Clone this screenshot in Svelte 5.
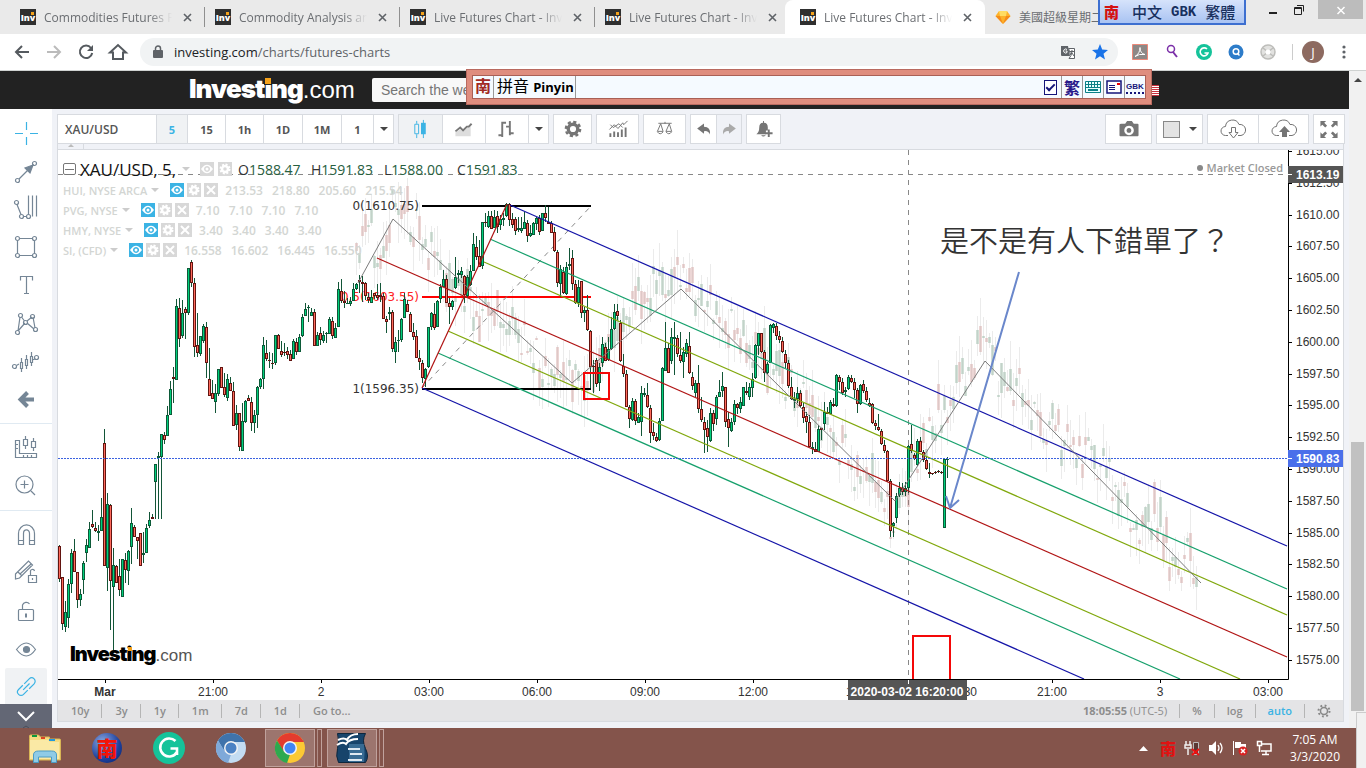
<script lang="ts">
	type Candle = [number, number, number, number, number];

	const tabs = [
		{ title: 'Commodities Futures Prices', active: false },
		{ title: 'Commodity Analysis and Opinion', active: false },
		{ title: 'Live Futures Chart - Investing.com', active: false },
		{ title: 'Live Futures Chart - Investing.com', active: false },
		{ title: 'Live Futures Chart - Investing.com', active: true }
	];

	const icons: Record<string, string> = {
		cross: '<path stroke="#3bb3e4" d="M12.5 1v8M12.5 16v8M1 12.5h8M16 12.5h8"/>',
		trend: '<path d="M5 20 19 6"/><circle cx="3.500" cy="21.500" r="2"/><circle cx="20.500" cy="4.500" r="2"/><path fill="#758696" d="m19 6-8 3 5 5z"/>',
		fork: '<circle cx="2.500" cy="5.500" r="2"/><circle cx="7.500" cy="19.500" r="2"/><circle cx="14.500" cy="19.500" r="2"/><path d="m3 7.500 4 10M9.500 19.500h3M14.500 17.500v-19M18.500-1.500v21M22.500-1.500v21"/>',
		rect: '<path d="M5.500 3.500h13M5.500 20.500h13M3.500 5.500v13M20.500 5.500v13"/><circle cx="3.500" cy="3.500" r="2"/><circle cx="20.500" cy="3.500" r="2"/><circle cx="3.500" cy="20.500" r="2"/><circle cx="20.500" cy="20.500" r="2"/>',
		text: '<path d="M6.500 7.500v-4h12v4M12.500 3.500v17M10 20.500h5"/>',
		pattern: '<path d="m4 20 2-14M7.500 6l3 4M13 10l5-4M19 6l2 11M4 20l7-8M13 12l7 6"/><circle cx="3.500" cy="21.500" r="2"/><circle cx="6.500" cy="4.500" r="2"/><circle cx="11.500" cy="11.500" r="2"/><circle cx="18.500" cy="5.500" r="2"/><circle cx="21.500" cy="18.500" r="2"/>',
		forecast: '<path d="M2.500 16.500 5 15M21 10l-3 1M7.500 9v14M12.500 6v14M17.500 3v14"/><path fill="#fff" d="M6.500 13.500h2v6h-2zM11.500 10.500h2v6h-2zM16.500 7.500h2v6h-2z"/><circle cx="0.500" cy="17.500" r="2"/><circle cx="22.500" cy="8.500" r="2"/>',
		back: '<path stroke-width="4" d="M20 12.500H8M13.500 5.500l-7 7 7 7"/>',
		measure: '<path d="M1.500 4.500h4v13h17v4h-21zM2 8.500h2M2 12.500h2M9.500 19v2M13.500 19v2M17.500 19v2M11.500 0v3M11.500 10v3M19.500 2v3M19.500 12v3"/><path d="M9.500 3.500h4v6h-4zM17.500 5.500h4v6h-4z"/>',
		zoom: '<circle cx="10.500" cy="10.500" r="8.500"/><path d="M17 17l4 4M10.500 6.500v8M6.500 10.500h8"/>',
		magnet: '<path d="M4.500 21.500v-11a7.500 8 0 0 1 16 0v11h-5v-11a2.500 3 0 0 0-6 0v11zM4.500 17.500h5M15.500 17.500h5"/>',
		pencil: '<path d="m1.500 13 13-13 4 4-13 13-4 1zM4 11l4 4M6 13l11-10M14.500 14.500h8v7h-8zM16.500 14v-3a2 2 0 0 1 4-1M18.500 17v2"/>',
		lock: '<rect x="4.500" y="10.500" width="15" height="11" rx="1"/><path d="M8.500 10V6a4 4 0 0 1 7-1"/><path stroke-width="2" d="M12 14.500v4"/>',
		eye: '<path d="M2.500 12.500q10-13 19 0-9 13-19 0z"/><circle cx="12.500" cy="12.500" r="3" fill="#758696"/>',
		link: '<g stroke="#3bb3e4" transform="rotate(-45 12 12)"><path d="M11 8.500H5a3.500 3.500 0 0 0 0 7h6M13 8.500h7a3.500 3.500 0 0 1 0 7h-7M8 12h9"/></g>'
	};

	const toolGroups = [
		['cross', 'trend', 'fork', 'rect', 'text', 'pattern', 'forecast', 'back'],
		['measure', 'zoom'],
		['magnet', 'pencil', 'lock', 'eye', 'link']
	];

	const intervals = [
		{ label: '5', width: 31 },
		{ label: '15', width: 38 },
		{ label: '1h', width: 38 },
		{ label: '1D', width: 39 },
		{ label: '1M', width: 39 },
		{ label: '1', width: 32 }
	];

	const barIcons: Record<string, string> = {
		candles: '<path stroke="#3bb3e4" fill="none" d="M5.500 2v3M5.500 16v4M3.500 5.500h4v10h-4zM12.500 1v19"/><path fill="#3bb3e4" d="M10 4h5v12h-5z"/>',
		area: '<path fill="#ddd" d="m1 14 5-3 3 2 8-7v12H1z"/><path fill="none" stroke="#777" stroke-width="2" d="m1 13 5-4 3 3 4-4h2l3-3"/>',
		bars: '<path fill="none" stroke="#777" stroke-width="2" d="M1 17h4M5 19V3M5 4h4M9 8h4M13 2v15M13 15h4"/>',
		gear: '<circle cx="10" cy="10.500" r="5" fill="none" stroke="#757575" stroke-width="3.500"/><circle cx="10" cy="10.500" r="7.500" fill="none" stroke="#757575" stroke-width="2.500" stroke-dasharray="3.300 2.590"/>',
		stats: '<path stroke="#757575" stroke-width="2" d="M2 19v-4M6 19v-6M10 19v-5M14 19v-8M18 19v-10"/><path fill="none" stroke="#757575" d="m1 11 5-5 4 4 5-6 1 2 4-4M2 6l3 3 6-4 4 4"/>',
		scales: '<path fill="none" stroke="#757575" d="M3 4.500h14M10 3v2M5.500 5 2 13h6zM14.500 5 11 13h6z"/><path fill="none" stroke="#757575" d="M2 13.500q3 4 6 0M11 13.500q3 4 6 0"/>',
		undo: '<path fill="#757575" d="M2 10 10 4v4q8 0 7 9-2-5-7-4v3z"/>',
		redo: '<path fill="#aaa" d="M18 10 10 4v4q-8 0-7 9 2-5 7-4v3z"/>',
		bell: '<path fill="#757575" d="M2 16q3-2 3-7 0-5 4-5V2h1v2q4 0 4 5v3h-2v4zM7 17h5q-3 3-5 0z"/><path stroke="#757575" stroke-width="2" d="M15 11v8M11 15h8"/>',
		camera: '<path fill="#757575" fill-rule="evenodd" d="M2 5h4l2-3h5l2 3h4q1 0 1 1v11q0 1-1 1H1q-1 0-1-1V6q0-1 2-1zM10 7a5 5 0 1 0 .1 0zM10 9.500a2.500 2.500 0 1 1-.1 0z"/>',
		full: '<path fill="#757575" d="M1 2h6L5 4l3 3-2 2-3-3-2 2zM19 2v6l-2-2-3 3-2-2 3-3-2-2zM1 20v-6l2 2 3-3 2 2-3 3 2 2zM19 20h-6l2-2-3-3 2-2 3 3 2-2z"/>'
	};

	const legend = [
		{ name: 'HUI, NYSE ARCA', values: ['213.53', '218.80', '205.60', '215.54'] },
		{ name: 'PVG, NYSE', values: ['7.10', '7.10', '7.10', '7.10'] },
		{ name: 'HMY, NYSE', values: ['3.40', '3.40', '3.40', '3.40'] },
		{ name: 'SI, (CFD)', values: ['16.558', '16.602', '16.445', '16.550'] }
	];

	const quote = [
		['O', '1588.47'],
		['H', '1591.83'],
		['L', '1588.00'],
		['C', '1591.83']
	];

	// high, body top, body bottom, low, rising
	const bars: Candle[] = [
		[545,546,579,582,0],[577,577,624,630,0],[601,612,627,632,1],[579,584,618,628,1],[549,553,584,593,1],[539,551,572,572,0],
		[572,572,600,608,0],[589,594,600,606,1],[561,563,580,594,1],[539,545,553,562,1],[522,529,548,548,1],[510,524,527,528,0],
		[522,528,531,532,0],[525,531,533,541,1],[498,517,531,531,1],[429,443,566,566,0],[493,504,568,591,1],[504,505,581,630,0],
		[548,565,587,650,1],[565,566,583,583,0],[559,576,590,596,0],[559,559,597,597,1],[553,560,570,583,0],[550,551,571,585,1],
		[508,523,547,564,1],[525,527,537,537,0],[537,537,541,559,0],[533,533,566,566,0],[532,553,555,563,1],[524,528,553,553,1],
		[512,520,526,528,1],[514,517,519,519,0],[464,464,482,519,1],[452,456,458,519,1],[434,434,457,519,1],[432,435,440,444,0],
		[406,415,436,436,1],[381,389,415,415,1],[367,377,379,403,0],[299,306,380,380,1],[298,308,339,347,0],[300,313,336,338,1],
		[307,309,313,339,0],[268,268,313,315,1],[260,262,283,287,0],[278,283,347,357,0],[313,345,353,357,0],[336,336,354,356,1],
		[324,326,341,343,1],[322,327,363,378,0],[348,379,396,396,0],[380,393,399,399,0],[384,393,402,413,1],[369,369,394,396,1],
		[367,367,388,388,0],[373,387,395,397,0],[374,379,398,401,1],[377,383,391,391,0],[382,391,426,426,0],[405,413,425,430,1],
		[413,413,447,451,0],[403,421,451,451,1],[400,401,422,423,1],[395,398,401,401,0],[397,402,423,431,0],[410,415,423,433,1],
		[386,387,415,428,1],[378,379,387,389,1],[337,345,379,389,1],[340,353,359,361,0],[352,360,361,368,0],[353,363,364,369,0],
		[335,335,363,365,1],[334,335,349,349,0],[341,351,355,357,0],[343,352,353,356,0],[347,351,355,359,0],[350,354,361,361,0],
		[339,341,359,359,1],[338,342,352,355,0],[334,337,352,352,1],[314,317,336,337,1],[303,309,316,316,1],[305,307,308,322,1],
		[308,312,316,316,1],[309,312,346,346,0],[332,335,346,346,1],[327,333,340,345,0],[331,335,341,343,1],[332,333,334,343,1],
		[317,319,334,334,1],[317,321,336,339,0],[323,328,338,338,1],[282,289,327,327,1],[279,291,301,303,0],[291,301,303,308,0],
		[298,303,304,304,1],[297,301,304,306,1],[283,289,301,301,1],[283,284,289,290,1],[275,280,282,293,0],[276,282,284,302,0],
		[282,283,296,300,0],[293,297,300,303,0],[290,297,303,303,1],[293,293,296,299,0],[284,295,298,300,0],[283,295,297,302,0],
		[293,296,319,319,0],[316,319,322,333,0],[307,312,314,320,1],[310,312,349,352,0],[337,342,352,363,1],[330,340,341,352,1],
		[318,319,340,342,1],[293,299,318,318,1],[300,304,312,312,0],[312,314,332,332,0],[323,332,337,340,0],[330,336,358,358,0],
		[350,358,362,370,0],[360,363,378,383,0],[368,369,379,387,1],[327,327,367,368,1],[312,313,327,330,1],[303,314,328,330,0],
		[300,301,327,327,1],[284,287,299,303,1],[270,279,287,287,1],[275,279,303,303,0],[298,303,307,324,0],[300,301,307,310,1],
		[257,277,288,289,1],[270,273,275,283,1],[267,271,275,278,1],[275,276,295,303,0],[275,277,296,297,1],[265,271,285,286,1],
		[233,244,271,271,1],[236,247,257,260,0],[240,256,267,267,0],[222,222,266,269,1],[213,222,223,227,0],[211,216,227,228,1],
		[211,216,229,229,0],[210,217,228,228,1],[211,216,227,233,0],[215,219,225,230,1],[213,218,220,226,1],[203,204,216,217,1],
		[203,204,220,226,0],[213,219,225,228,0],[217,219,231,235,0],[217,228,230,232,1],[217,228,231,233,1],[212,222,229,229,1],
		[220,223,236,242,0],[225,233,236,237,1],[222,223,235,235,1],[217,218,224,230,1],[215,218,232,235,0],[213,213,231,231,1],
		[205,213,218,222,0],[207,222,224,224,0],[221,223,233,233,0],[227,232,251,252,0],[250,252,283,287,0],[265,269,284,297,1],
		[267,272,293,294,0],[262,267,294,295,1],[248,264,266,270,1],[250,258,284,290,0],[280,284,303,304,0],[280,287,303,307,1],
		[281,281,313,318,0],[307,310,313,322,1],[295,310,330,331,0],[330,331,367,388,0],[360,366,367,393,0],[358,360,384,387,0],
		[363,367,383,391,1],[337,344,363,367,1],[343,347,361,361,0],[337,349,360,361,1],[317,329,349,350,1],[304,312,329,330,1],
		[304,311,316,320,0],[320,323,361,362,0],[354,366,374,377,0],[370,374,407,407,0],[405,407,419,428,0],[398,401,420,421,1],
		[399,401,421,425,0],[413,417,423,423,1],[386,393,422,436,1],[388,393,395,397,1],[383,395,407,408,0],[405,408,433,443,0],
		[423,432,436,440,0],[433,437,441,442,0],[418,421,440,441,1],[367,368,421,421,1],[322,348,371,371,1],[343,348,373,373,0],
		[328,337,361,364,1],[322,337,339,375,1],[335,338,354,357,0],[332,355,361,363,0],[347,352,362,378,1],[339,343,354,357,1],
		[332,346,373,374,0],[372,377,386,390,0],[380,383,393,397,1],[365,383,409,413,0],[397,409,420,422,0],[417,422,430,453,0],
		[420,428,437,452,0],[408,413,441,442,1],[410,413,424,431,0],[395,397,419,425,1],[380,392,397,397,1],[372,386,391,397,1],
		[387,387,422,427,0],[412,419,428,447,0],[418,422,431,432,1],[400,404,422,425,1],[403,404,408,414,0],[397,402,409,413,1],
		[387,387,406,406,1],[382,391,393,395,0],[383,387,397,400,1],[373,379,388,397,1],[344,345,378,379,1],[333,333,346,355,1],
		[333,333,352,353,0],[350,352,373,382,0],[362,364,373,374,1],[324,325,363,363,1],[323,324,328,333,1],[323,326,336,340,0],
		[331,336,340,343,0],[337,341,352,353,0],[350,354,363,368,0],[360,363,386,388,0],[377,387,399,400,0],[392,399,401,408,1],
		[387,393,399,403,1],[390,393,406,408,0],[403,407,418,423,0],[412,416,422,433,0],[415,422,447,447,0],[442,447,449,454,1],
		[442,449,452,452,0],[425,429,452,452,1],[428,428,430,440,0],[402,412,424,430,1],[407,412,414,414,0],[400,402,414,414,1],
		[398,404,406,407,0],[374,375,406,407,1],[375,377,382,390,0],[378,382,393,395,0],[387,390,392,397,1],[375,377,389,390,1],
		[375,378,382,383,0],[378,382,390,398,0],[388,390,404,413,0],[384,385,404,405,1],[380,384,391,393,0],[387,391,400,402,0],
		[398,403,406,407,0],[403,404,423,424,0],[420,423,426,430,0],[414,427,430,431,0],[429,431,444,445,0],[440,445,451,453,0],
		[450,451,481,482,0],[479,481,531,537,0],[522,523,526,537,1],[493,496,518,523,1],[482,488,495,497,1],[483,488,492,495,0],
		[482,488,492,496,1],[445,446,488,493,1],[425,444,451,453,0],[453,455,459,460,0],[439,441,465,466,1],[437,441,452,452,0],
		[450,452,460,462,0],[457,460,469,470,0],[463,472,474,478,0],[473,473,474,475,0],[471,472,473,474,0],[470,471,472,473,0],
		[471,472,473,474,0],[458,459,528,528,1],[457,459,460,478,1]
	];

	const ghostPath = [
		[357,265],[366,232],[378,246],[390,212],[404,208],[415,230],[440,268],[470,302],[500,320],[520,338],[545,365],
		[575,382],[600,372],[625,310],[650,290],[680,275],[720,322],[760,350],[795,390],[815,424],[850,462],[880,500],
		[895,528],[905,480],[920,450],[935,420],[955,392],[970,365],[981,345],[992,360],[1005,395],[1020,388],[1030,410],
		[1050,430],[1080,452],[1100,462],[1115,482],[1135,524],[1150,512],[1160,530],[1172,560],[1190,556],[1197,608]
	];

	// projected bars follow the path with a fixed pseudo random spread
	function buildGhosts() {
		const out = [];
		let seed = 11;
		const rnd = () => (seed = (seed * 16807) % 2147483647) / 2147483647;
		let k = 0;
		for (let x = 356; x <= 1197; x += 3) {
			while (k < ghostPath.length - 2 && ghostPath[k + 1][0] < x) k++;
			const [x0, y0] = ghostPath[k];
			const [x1, y1] = ghostPath[k + 1];
			const mid = Math.round(y0 + ((y1 - y0) * (x - x0)) / (x1 - x0) + (rnd() - 0.5) * 44);
			const half = Math.round(1 + rnd() * rnd() * 18);
			const high = mid - half - Math.round(rnd() * 28);
			const low = mid + half + Math.round(rnd() * 28);
			out.push({ x, top: mid - half, size: half * 2, high, low, up: rnd() > 0.45 });
		}
		return out;
	}
	const ghosts = buildGhosts();

	const channel = [
		{ d: 'M510 205 1287 546', color: '#1414a8' },
		{ d: 'M490 239 1287 589', color: '#16a06c' },
		{ d: 'M484 262 1287 615', color: '#80a80c' },
		{ d: 'M377 258 1287 657', color: '#b01414' },
		{ d: 'M448 331 1240 679', color: '#80a80c' },
		{ d: 'M438 353 1180 679', color: '#16a06c' },
		{ d: 'M422 388 1084 679', color: '#1414a8' }
	];

	const prices = Array.from({ length: 17 }, (_, i) => ({
		label: (1615 - i * 2.5).toFixed(2),
		y: Math.round(151 + i * 31.8)
	}));

	const times = [
		['Mar', 105], ['21:00', 213], ['2', 321], ['03:00', 429], ['06:00', 537], ['09:00', 645],
		['12:00', 753], ['15:00', 861], ['17:30', 962], ['21:00', 1052], ['3', 1160], ['03:00', 1268]
	] as [string, number][];

	const ranges = ['10y', '3y', '1y', '1m', '7d', '1d', 'Go to...'];
</script>

{#snippet barIcon(name: string, size = 20)}
	<svg width={size} height={size} viewBox="0 0 20 21" aria-hidden="true">{@html barIcons[name]}</svg>
{/snippet}

{#snippet inv()}
	<span class="inv">Inv<i></i></span>
{/snippet}

{#snippet legendEye()}
	<svg width="14" height="14" viewBox="0 0 14 14"><path fill="#fff" fill-rule="evenodd" d="M1 7q6-8.500 12 0-6 8.500-12 0zM7 4a3 3 0 1 0 .1 0z" /><circle cx="7" cy="7" r="1.500" fill="#fff" /></svg>
{/snippet}

{#snippet legendGear()}
	<svg width="14" height="14" viewBox="0 0 14 14"><circle cx="7" cy="7" r="3" fill="none" stroke="#fff" stroke-width="2.500" /><circle cx="7" cy="7" r="4.500" fill="none" stroke="#fff" stroke-width="2" stroke-dasharray="2 1.530" /></svg>
{/snippet}

{#snippet chromeLogo(a: string, b: string, c: string, d: string)}
	<svg width="32" height="32" viewBox="0 0 32 32">
		<circle cx="16" cy="16" r="15" fill={c} />
		<path fill={a} d="M3 8.500A15 15 0 0 1 29 8.500L30 10H16L9.500 19.500z" />
		<path fill={b} d="M3 8.500 10 19.500l6 3L13 31A15 15 0 0 1 3 8.500z" />
		<circle cx="16" cy="16" r="7" fill="#f4f4f4" /><circle cx="16" cy="16" r="5.500" fill={d} />
	</svg>
{/snippet}

<div class="screen">
	<nav class="tabs" aria-label="Tabs">
		{#each tabs as tab}
			<div class="tab" class:active={tab.active}>
				{@render inv()}
				<span class="tab-title">{tab.title}</span>
				<button class="close" aria-label="Close tab"><svg width="9" height="9" viewBox="0 0 9 9"><path stroke="#5f6368" stroke-width="1.600" d="m1 1 7 7M8 1 1 8" /></svg></button>
			</div>
		{/each}
		<div class="tab last">
			<svg width="16" height="16" viewBox="0 0 16 16"><path fill="#fdb22a" d="M4 2h8l3.500 5L8 15 .500 7z" /><path fill="#ffdc62" d="M4 2h8L11 7H5z" /><path fill="#f58b1a" d="M.500 7H5l3 8zM15.500 7H11l-3 8z" /></svg>
			<span class="tab-title">美國超級星期二</span>
		</div>
		<div class="window-buttons">
			<button aria-label="Minimize"><svg width="30" height="18" viewBox="0 0 30 18"><path stroke="#222" stroke-width="2" d="M11 12h8" /></svg></button>
			<button aria-label="Restore"><svg width="20" height="18" viewBox="0 0 20 18"><path fill="none" stroke="#222" d="M6.500 6.500h7v7h-7zM6 7.500h8M9 4.500h6.500v6" /></svg></button>
			<button class="exit" aria-label="Close"><svg width="45" height="18" viewBox="0 0 45 18"><path stroke="#fff" stroke-width="1.500" d="m19.500 6 7 7M26.500 6l-7 7" /></svg></button>
		</div>
	</nav>

	<div class="address-bar">
		<button aria-label="Back"><svg width="20" height="20" viewBox="0 0 20 20"><path fill="none" stroke="#555a5f" stroke-width="2" d="M17 10H4M10 4l-6 6 6 6" /></svg></button>
		<button aria-label="Forward"><svg width="20" height="20" viewBox="0 0 20 20"><path fill="none" stroke="#bbb" stroke-width="2" d="M3 10h13M10 4l6 6-6 6" /></svg></button>
		<button aria-label="Reload"><svg width="20" height="20" viewBox="0 0 20 20"><path fill="none" stroke="#555a5f" stroke-width="2" d="M15 6a6.200 6.200 0 1 0 1.200 5" /><path fill="#555a5f" d="M17 3v6h-6z" /></svg></button>
		<button aria-label="Home"><svg width="20" height="20" viewBox="0 0 20 20"><path fill="none" stroke="#555a5f" stroke-width="2" d="M2 10.500 10 3l8 7.500h-3V17H5v-6.500z" /></svg></button>
		<div class="omnibox">
			<svg width="12" height="14" viewBox="0 0 12 14"><path fill="#5f6368" d="M2 5h8q1 0 1 1v6q0 1-1 1H2q-1 0-1-1V6q0-1 1-1z" /><path fill="none" stroke="#5f6368" stroke-width="1.500" d="M3.500 6V3.500a2.500 2.500 0 0 1 5 0V6" /></svg>
			<span class="url"><b>investing.com</b>/charts/futures-charts</span>
			<svg width="16" height="16" viewBox="0 0 16 16"><path fill="#5f6368" d="M1 2h7l2 10H2q-1 0-1-1z" /><path fill="#fff" stroke="#5f6368" d="M8.500 4.500h6v10H9l2-3z" /><path stroke="#5f6368" d="M10 7.500h4M12 6v2l-1 3M12 9l2 3" /><path fill="none" stroke="#fff" d="M7 5.500a2 2 0 1 0 0 3V7H5.500" /></svg>
			<svg width="16" height="16" viewBox="0 0 16 16"><path fill="#1a73e8" d="m8 0 2.200 5.600 5.800.4-4.500 3.700 1.500 5.800L8 12.300l-5 3.200 1.500-5.800L0 6l5.800-.4z" /></svg>
		</div>
		<div class="extensions">
			<svg width="16" height="16" viewBox="0 0 16 16"><path fill="#8d8886" stroke="#ed8979" d="M.500.500h15v15H.500z" /><path fill="none" stroke="#fff" d="M3 12.500q5-3 5-9 0 6 5 7-6-1-10 2z" /></svg>
			<svg width="16" height="16" viewBox="0 0 16 16"><circle cx="7" cy="5" r="3.500" fill="none" stroke="#7b2fa8" stroke-width="1.500" /><path stroke="#7b2fa8" stroke-width="2" d="m9 8 4 5" /></svg>
			<svg width="16" height="16" viewBox="0 0 16 16"><circle cx="8" cy="8" r="8" fill="#15c39a" /><path fill="none" stroke="#fff" stroke-width="1.600" d="M11 5a4 4 0 1 0 1 4H8.500" /></svg>
			<svg width="16" height="16" viewBox="0 0 16 16"><circle cx="8" cy="8" r="7.500" fill="#2d7cc9" /><circle cx="8" cy="7.500" r="2.800" fill="none" stroke="#fff" stroke-width="1.500" /><path stroke="#fff" stroke-width="1.500" d="m9.500 9.500 2 2" /></svg>
			<svg width="16" height="16" viewBox="0 0 16 16"><circle cx="8" cy="8" r="7" fill="#e2e2e0" stroke="#bdbdba" stroke-width="1.500" /><path fill="none" stroke="#bdbdba" stroke-width="1.500" d="m3 4 10 8M13 4 3 12" /><circle cx="8" cy="8" r="2.500" fill="#fff" /></svg>
			<span class="divider"></span>
			<span class="avatar">J</span>
			<button aria-label="Menu"><svg width="8" height="16" viewBox="0 0 8 16"><g fill="#5f6368"><circle cx="4" cy="3" r="1.600" /><circle cx="4" cy="8" r="1.600" /><circle cx="4" cy="13" r="1.600" /></g></svg></button>
		</div>
	</div>

	<div class="page">
		<div class="site">
			<header class="site-header">
				<a class="logo" href="#home"><strong>Invest<span>i</span>ng</strong>.com</a>
				<input type="text" placeholder="Search the website..." aria-label="Search the website" />
				<svg class="flag" width="12" height="11" viewBox="0 0 12 11"><path fill="#fff" d="M0 0h12v11H0z" /><path stroke="#c8313e" d="M0 .500h12M0 2.500h12M0 4.500h12M0 6.500h12M0 8.500h12M0 10.500h12" /></svg>
			</header>

			<div class="workspace">
				<aside class="sidebar">
					{#each toolGroups as group}
						<div class="tool-group">
							{#each group as name}
								<button class="tool" class:selected={name === 'link'} aria-label={name}>
									<svg width="24" height="24" viewBox="0 0 24 24" fill="none" stroke="#758696" stroke-width="1.200">{@html icons[name]}</svg>
								</button>
							{/each}
						</div>
					{/each}
					<button class="more" aria-label="More tools"><svg width="18" height="24" viewBox="0 0 18 24"><path fill="none" stroke="#fff" stroke-width="2" d="m1 8 8 8 8-8" /><path fill="none" stroke="#4c4f5a" d="m6 24 3-2 3 2" /></svg></button>
				</aside>

				<main class="chart">
					<div class="toolbar">
						<div class="bar-group intervals">
							<button class="symbol">XAU/USD</button>
							{#each intervals as item, i}
								<button class:on={i === 0} style="width: {item.width}px">{item.label}</button>
							{/each}
							<button class="drop" aria-label="More intervals"><i class="caret"></i></button>
						</div>
						<div class="bar-group styles">
							<button class="on wide" aria-label="Candles">{@render barIcon('candles')}</button>
							<button class="wide" aria-label="Area">{@render barIcon('area')}</button>
							<button class="wide" aria-label="Bars">{@render barIcon('bars')}</button>
							<button class="drop" aria-label="More styles"><i class="caret"></i></button>
						</div>
						<div class="bar-group"><button class="mid" aria-label="Settings">{@render barIcon('gear')}</button></div>
						<div class="bar-group"><button class="wide" aria-label="Indicators">{@render barIcon('stats')}</button></div>
						<div class="bar-group"><button class="wide" aria-label="Compare">{@render barIcon('scales')}</button></div>
						<div class="bar-group">
							<button class="small" aria-label="Undo">{@render barIcon('undo', 18)}</button>
							<button class="small off" aria-label="Redo">{@render barIcon('redo', 18)}</button>
						</div>
						<div class="bar-group"><button class="bell" aria-label="Alert">{@render barIcon('bell')}</button></div>
						<div class="bar-group right"><button class="large" aria-label="Snapshot">{@render barIcon('camera')}</button></div>
						<div class="bar-group"><button class="large" aria-label="Background"><i class="swatch"></i><i class="caret"></i></button></div>
						<div class="bar-group">
							<button class="cloud" aria-label="Load"><svg width="26" height="20" viewBox="0 0 26 20"><path fill="none" stroke="#757575" d="M8 16.500H5.500a4.500 4.500 0 0 1 0-9 7 7 0 0 1 13.500-2 5.500 5.500 0 0 1 2 11H18" /><path fill="#fff" stroke="#757575" d="M11.500 8.500h4v5H18L13.500 19 9 13.500h2.500z" /></svg></button>
							<button class="cloud" aria-label="Save"><svg width="26" height="20" viewBox="0 0 26 20"><path fill="none" stroke="#757575" d="M8 16.500H5.500a4.500 4.500 0 0 1 0-9 7 7 0 0 1 13.500-2 5.500 5.500 0 0 1 2 11H18" /><path fill="#757575" d="M11 18v-5H8l5.500-6 5.500 6h-3v5z" /></svg></button>
						</div>
						<div class="bar-group"><button class="full" aria-label="Full screen">{@render barIcon('full')}</button></div>
					</div>
					<div class="fold"><i></i></div>

					<div class="plot">
						<svg class="canvas" viewBox="58 150 1285 550" role="img" aria-label="XAU/USD, 5">
							<clipPath id="pane"><path d="M58 150h1230v529H58z" /></clipPath>
							<g clip-path="url(#pane)">
								<path class="cross" d="M58 174.500h1230M908.500 150v529" />
								{#each ghosts as g}
									<path stroke="#000" stroke-opacity="0.08" d="M{g.x + 0.5} {g.high}V{g.low}" />
									<rect x={g.x - 1} y={g.top} width="3" height={g.size} fill={g.up ? '#6f9e82' : '#c4807c'} fill-opacity="0.32" />
								{/each}
								<g class="fib">
									<text x="419" y="210">0(1610.75)</text>
									<text x="419" y="301" fill="#f22">0.5(1603.55)</text>
									<text x="419" y="393">1(1596.35)</text>
								</g>
								<path stroke="#000" stroke-width="2" d="M422 206h169M422 389h169" />
								<path stroke="#f00" stroke-width="2" d="M422 297h169" />
								<path class="cross" d="m422 388 169-182" />
								{#each bars as [high, top, bottom, low, up], i}
									<path stroke="#125537" d="M{59.5 + i * 3} {high}V{low}" />
									<rect x={58 + i * 3} y={top} width="3" height={Math.max(bottom - top, 1)} fill={up ? '#0c5a38' : '#621410'} />
									{#if bottom - top > 2}
										<rect x={59 + i * 3} y={top + 1} width="1" height={bottom - top - 2} fill={up ? '#00cf7c' : '#ff6a5c'} />
									{/if}
								{/each}
								{#each channel as line}
									<path d={line.d} stroke={line.color} stroke-width="1.200" />
								{/each}
								<path stroke="#b01414" stroke-width="1.200" d="m422 388 85-184" />
								<path fill="none" stroke="#7b7b7b" d="m358 283 35-64 179 164 109-94 214 212 90-140 216 222" />
								<path fill="none" stroke="#f40808" stroke-width="2" d="M584 373h25v26h-25zM913 680v-44h37v44" />
								<path fill="none" stroke="#6a87cb" stroke-width="2" d="m1019 272-69 236M946 496l4 12 9-8" />
								<path stroke="#3b62e0" stroke-dasharray="2 1" d="M58 458.500h1230" />
								<text class="note" x="940" y="252">是不是有人下錯單了？</text>
							</g>
							<g class="price-axis">
								{#each prices as price}
									<path stroke="#000" d="M1288 {price.y + 0.5}h4" />
									<text x="1296" y={price.y + 4}>{price.label}</text>
								{/each}
							</g>
							<path stroke="#000" fill="none" d="M1288.500 150v529.500H58" />
							<path fill="#555" d="M1288 166h55v17h-55z" />
							<path fill="#4a6fea" d="M1288 450h55v17h-55z" />
							<path stroke="#fff" d="M1288 174.500h4M1288 458.500h4" />
							<text class="tag" x="1296" y="179">1613.19</text>
							<text class="tag" x="1296" y="463">1590.83</text>
							<g class="time-axis">
								{#each times as [label, x]}
									<path stroke="#000" d="M{x + 0.5} 680v3" />
									<text {x} y="696" class:bold={label === 'Mar'}>{label}</text>
								{/each}
							</g>
							<path fill="#555" d="M848 680h119v20H848z" />
							<path stroke="#fff" d="M908.500 680v4" />
							<text class="tag stamp" x="907" y="696">2020-03-02 16:20:00</text>
						</svg>

						<div class="legend">
							<div class="legend-main">
								<button class="fold-box" aria-label="Collapse"></button>
								<span class="pair">XAU/USD, 5,</span>
								<i class="caret pale"></i>
								<button class="chip" aria-label="Hide">{@render legendEye()}</button>
								<button class="chip" aria-label="Format">{@render legendGear()}</button>
								{#each quote as [key, value]}
									<span class="quote">{key}<b>{value}</b></span>
								{/each}
							</div>
							{#each legend as row}
								<div class="legend-row">
									<span class="legend-name">{row.name}</span>
									<i class="caret pale"></i>
									<span class="chips">
										<button class="chip blue" aria-label="Hide {row.name}">{@render legendEye()}</button>
										<button class="chip" aria-label="Format {row.name}">{@render legendGear()}</button>
										<button class="chip" aria-label="Remove {row.name}"><svg width="14" height="14" viewBox="0 0 14 14"><path stroke="#fff" stroke-width="2" d="m3 3 8 8M11 3l-8 8" /></svg></button>
									</span>
									{#each row.values as value}
										<span class="legend-value">{value}</span>
									{/each}
								</div>
							{/each}
						</div>
						<div class="market"><i></i>Market Closed</div>
						<div class="watermark logo"><strong>Invest<span>i</span>ng</strong>.com</div>
					</div>

					<footer class="bottom-bar">
						{#each ranges as range}
							<button class="range">{range}</button>
						{/each}
						<div class="clock"><b>18:05:55</b> (UTC-5)</div>
						<button>%</button>
						<button>log</button>
						<button class="auto">auto</button>
						<button aria-label="Chart settings"><svg width="14" height="14" viewBox="0 0 14 14" fill="none" stroke="#888"><circle cx="7" cy="7" r="3.500" stroke-width="1.500" /><circle cx="7" cy="7" r="5.500" stroke-width="2" stroke-dasharray="1.800 2.520" /></svg></button>
					</footer>
				</main>
			</div>
		</div>
		<div class="scrollbar"><i></i><span></span></div>
	</div>

	<footer class="taskbar">
		<button class="app" aria-label="Explorer">
			<svg width="34" height="32" viewBox="0 0 34 32"><path fill="#f4dc83" stroke="#d8b655" d="M1.500 6.500V4q0-1 1-1h8l2 2h9V7h10q1 0 1 1v20h-31z" /><path fill="#0b9a3c" d="M4 3h5v2H4z" /><path fill="#d42" d="M13 5h4v2h-4z" /><path fill="#29d" d="M21 7h6v2h-6z" /><path fill="#fae9a5" d="M2 8h18l2 2h9v17H2z" /><path fill="#8fcbe6" stroke="#4c9cc4" d="M5.500 30.500V23q0-4 5-4h13q5 0 5 4v7.500h-5V25h-13v5.500z" /></svg>
		</button>
		<button class="app" aria-label="NJStar"><span class="globe">南</span></button>
		<button class="app" aria-label="Grammarly"><svg width="32" height="32" viewBox="0 0 32 32"><circle cx="16" cy="16" r="16" fill="#15c39a" /><path fill="none" stroke="#fff" stroke-width="2.600" d="M22.500 9A9 9 0 1 0 24 20v-3.500h-6.500M24 17v6" /></svg></button>
		<button class="app" aria-label="Chromium">{@render chromeLogo('#3f73ab', '#7fa9d9', '#c3dcf2', '#4b82c4')}</button>
		<button class="app open" aria-label="Chrome">{@render chromeLogo('#e33b2e', '#2da94f', '#fcc934', '#4285f4')}</button>
		<button class="app open" aria-label="Writer">
			<svg width="32" height="32" viewBox="0 0 32 32"><path fill="#17446b" stroke="#0e263c" d="M1.500 1.500h28q-4 7 0 15t0 14h-27q-3-6-1-14t0-15z" /><path fill="#4f86ad" d="M13 12h15q1 8 0 18H13z" opacity=".6" /><path fill="none" stroke="#fff" stroke-width="2" d="M2 8q6-3 9 0 3-6 11-6M1 13q6-4 9-1 3-5 12-5" /><path stroke="#dfe9f2" stroke-width="2" d="M12 17h12M14 22h12M12 28h14" /></svg>
		</button>
		<div class="tray">
			<svg width="9" height="5" viewBox="0 0 9 5"><path fill="#fff" d="m0 5 4.500-5L9 5z" /></svg>
			<span class="tray-nj">南</span>
			<svg width="16" height="16" viewBox="0 0 16 16"><path fill="none" stroke="#eee" stroke-width="1.500" d="M2 1v4M6 1v4M1 5h6v3H1zM4 9v6" /><path fill="#5b3833" stroke="#bbb" d="M9.500 2.500h5v12h-5z" /><path stroke="#e11" stroke-width="2" d="m8 9 7 6M15 9l-7 6" /></svg>
			<svg width="16" height="16" viewBox="0 0 16 16"><path fill="#fff" d="M1 5h3l4-4v14l-4-4H1z" /><path fill="none" stroke="#fff" stroke-width="1.300" d="M10 5q2 3 0 6M12 3q4 5 0 10" /></svg>
			<svg width="16" height="16" viewBox="0 0 16 16"><path fill="#fff" d="M1 1h1v14H1zM3 2h6v2h5v6H8V8H3z" /><circle cx="11" cy="11" r="4.500" fill="#d92222" /><path stroke="#fff" stroke-width="1.500" d="m9 9 4 4M13 9l-4 4" /></svg>
			<svg width="16" height="16" viewBox="0 0 16 16"><path fill="none" stroke="#fff" stroke-width="1.500" d="M6 4h9v7H5M10 11v3M6 14.500h7M1.500 1.500h4v4h-4zM3.500 6v6" /></svg>
			<time>7:05 AM<br />3/3/2020</time>
		</div>
	</footer>

	<div class="corner-window"></div>

	<div class="language-bar"><b>南</b><span>中文</span><span>GBK</span><span>繁體</span></div>

	<div class="ime">
		<div class="ime-inner">
			<span class="ime-logo">南</span>
			<span class="ime-mode">拼音 <b>Pinyin</b></span>
			<div class="ime-buttons">
				<input type="checkbox" checked aria-label="Enabled" />
				<button class="ime-char">繁</button>
				<button aria-label="Keyboard"><svg width="16" height="12" viewBox="0 0 16 12"><path fill="#e9ffff" stroke="#0b7f86" d="M.500.500h15v11H.500zM1 3.500h14M1 6.500h14M3.500 1v6M6.500 1v6M9.500 1v6M12.500 1v6" /><path stroke="#0b7f86" stroke-width="2" d="M3 9h10" /></svg></button>
				<button aria-label="Mail"><svg width="16" height="14" viewBox="0 0 16 14"><path fill="#fff" stroke="#15157a" stroke-width="1.500" d="M1 1h14v12H1z" /><path stroke="#15157a" d="M3 5.500h6M3 7.500h6M3 9.500h6" /><path fill="#e00" d="M11 3h3v2h-3z" /></svg></button>
				<button class="ime-gbk"><span>GBK</span></button>
			</div>
		</div>
	</div>
</div>

<style>
	:global(body) {
		background: #fff;
	}

	.screen {
		position: relative;
		overflow: hidden;
		font-family: 'Open Sans', 'Noto Sans CJK TC', sans-serif;
		font-size: 12px;
		color: #444;
	}

	button {
		display: flex;
		align-items: center;
		justify-content: center;
		margin: 0;
		padding: 0;
		border: 0;
		background: none;
		font: inherit;
		color: inherit;
	}

	svg {
		display: block;
		flex: none;
		overflow: visible;
	}

	/* browser */
	.tabs {
		display: flex;
		height: 34px;
		padding-left: 8px;
		background: #eaeaea;
	}

	.tab {
		position: relative;
		display: flex;
		flex: 0 1 195px;
		box-sizing: border-box;
		min-width: 0;
		align-items: center;
		gap: 8px;
		padding: 0 8px 0 12px;
		color: #6b6e72;
	}

	.tab::after {
		content: '';
		position: absolute;
		right: -2px;
		width: 1px;
		height: 20px;
		background: #8f8f8f;
	}

	.tab:nth-child(4)::after,
	.tab.last::after,
	.tab.active::after {
		display: none;
	}

	.tab.active {
		margin-left: -3px;
		margin-right: -2px;
		padding-left: 15px;
		flex-basis: 200px;
		padding-right: 10px;
		border-radius: 8px 8px 0 0;
		background: #fff;
	}

	.tab.last {
		flex: none;
		padding-right: 0;
	}

	.tab-title {
		flex: 1;
		overflow: hidden;
		white-space: nowrap;
		mask-image: linear-gradient(90deg, #000 82%, transparent);
	}

	.tab.last .tab-title {
		mask-image: none;
	}

	.close {
		width: 15px;
		height: 16px;
	}

	.inv {
		position: relative;
		width: 16px;
		height: 16px;
		background: #2f2f2f;
		font: 900 9px/17px 'Open Sans', sans-serif;
		text-align: center;
		color: #fff;
	}

	.inv i {
		position: absolute;
		top: 3px;
		right: 2px;
		width: 3px;
		height: 3px;
		background: #f5a21b;
	}

	.window-buttons {
		display: flex;
		height: 19px;
		margin-left: auto;
		padding-right: 3px;
	}

	.exit {
		background: #bcbcbc;
		margin-left: 10px;
	}

	.address-bar {
		display: flex;
		align-items: center;
		gap: 12px;
		height: 36px;
		padding: 0 18px 0 12px;
		border-bottom: 1px solid #cfd2d1;
		background: #fff;
	}

	.omnibox {
		display: flex;
		flex: 1;
		align-items: center;
		gap: 16px;
		height: 28px;
		padding: 0 10px 0 12px;
		border-radius: 14px;
		background: #f1f3f4;
	}

	.url {
		flex: 1;
		margin-left: -6px;
		font-size: 13px;
		color: #5f6368;
	}

	.url b {
		font-weight: 400;
		color: #202124;
	}

	.extensions {
		display: flex;
		align-items: center;
		gap: 16px;
		padding-left: 2px;
	}

	.divider {
		width: 1px;
		height: 16px;
		margin-right: -7px;
		background: #ccc;
	}

	.avatar {
		width: 22px;
		border-radius: 50%;
		background: #8d6a60;
		font-size: 13px;
		line-height: 22px;
		text-align: center;
		color: #fff;
	}

	/* site */
	.page {
		display: flex;
	}

	.site {
		flex: 1;
		min-width: 0;
		background: #f0f2f7;
	}

	.site-header {
		display: flex;
		align-items: center;
		gap: 17px;
		height: 38px;
		padding-left: 189px;
		background: #222;
	}

	.flag {
		margin: 0 190px 0 auto;
	}

	.logo {
		width: 166px;
		font: 24px/38px 'Liberation Sans', Arial, sans-serif;
		white-space: nowrap;
		text-decoration: none;
		color: #fff;
	}

	.logo strong {
		font: 900 26px/36px Inter, 'Open Sans', sans-serif;
		letter-spacing: -1px;
	}

	.logo strong span {
		position: relative;
	}

	.logo strong span::after {
		content: '';
		position: absolute;
		top: 5px;
		left: 1px;
		width: 6px;
		height: 6px;
		background: #f5a21b;
		box-shadow: 0 0 0 1px #222;
	}

	.site-header input {
		width: 260px;
		height: 24px;
		box-sizing: border-box;
		padding: 0 9px;
		border: 0;
		border-radius: 2px;
		background: #f8f8f8;
		font: 14px 'Liberation Sans', Arial, sans-serif;
	}

	.workspace {
		display: flex;
		gap: 5px;
	}

	.sidebar {
		width: 52px;
		background: #fff;
	}

	.tool-group {
		padding: 5px;
		border-bottom: 1px solid #e0eaf2;
	}

	.tool-group:nth-child(3) {
		border: 0;
	}

	.tool {
		width: 42px;
		height: 38px;
	}

	.tool.selected {
		border-radius: 2px;
		background: #f0f2f4;
	}

	.more {
		position: relative;
		width: 100%;
		height: 24px;
		margin-top: -7px;
		background: #636775;
	}

	.chart {
		flex: 1;
		min-width: 0;
		margin-right: 5px;
		padding: 5px 0 6px;
	}

	.toolbar {
		display: flex;
		gap: 4px;
		height: 30px;
		margin-right: -1px;
	}

	.bar-group {
		display: flex;
		box-sizing: border-box;
		border: 1px solid #d8dbe0;
		background: #fff;
	}

	.bar-group.right {
		margin-left: auto;
	}

	.bar-group button {
		box-sizing: border-box;
		font-size: 11px;
		font-weight: 700;
		color: #555;
	}

	.bar-group button + button {
		border-left: 1px solid #d8dbe0;
	}

	.bar-group .symbol {
		width: 98px;
		justify-content: flex-start;
		padding-left: 7px;
		font-size: 12px;
		font-weight: 600;
	}

	.bar-group .on {
		background: #f0f2f4;
		color: #3bb3e4;
	}

	.bar-group .off {
		background: #f0f2f7;
	}

	.drop {
		width: 20px;
	}

	.wide {
		width: 41px;
	}

	.styles .wide {
		width: 43px;
	}

	.mid {
		width: 37px;
	}

	.small {
		width: 25px;
	}

	.bell {
		width: 33px;
	}

	.large {
		width: 45px;
		gap: 9px;
	}

	.cloud {
		width: 50px;
	}

	.full {
		width: 30px;
	}

	.caret {
		border: 4px solid transparent;
		border-top-color: #444;
		border-bottom: 0;
	}

	.caret.pale {
		border-top-color: #ccc;
	}

	.swatch {
		width: 15px;
		height: 15px;
		border: 1px solid #888;
		background: #e3e3e3;
	}

	.fold {
		height: 5px;
		border: solid #d8dbe0;
		border-width: 0 1px 1px;
	}

	.fold i {
		display: block;
		width: 25px;
		height: 5px;
		border-right: 1px solid #d8dbe0;
	}

	.fold i::after {
		content: '';
		display: block;
		width: 0;
		margin: 0 auto;
		border: 3px solid transparent;
		border-top: 0;
		border-bottom-color: #bbb;
	}

	.plot {
		position: relative;
		border: solid #d8dbe0;
		border-width: 0 1px;
		background: #fff;
	}

	.canvas {
		width: 100%;
		height: auto;
		overflow: hidden;
		font-family: 'Liberation Sans', Arial, sans-serif;
		font-size: 12px;
		fill: #333;
	}

	.canvas .cross {
		stroke: #888;
		stroke-dasharray: 5 5;
	}

	.fib {
		font-family: 'DejaVu Sans', sans-serif;
		text-anchor: end;
	}

	.note {
		font-family: 'Noto Sans CJK TC', sans-serif;
		font-size: 29px;
		font-weight: 350;
	}

	.time-axis text,
	.stamp {
		text-anchor: middle;
	}

	.bold,
	.tag {
		font-weight: 700;
	}

	.tag {
		fill: #fff;
	}

	.legend {
		position: absolute;
		top: 9px;
		left: 5px;
		color: #d3d6d3;
	}

	.legend-main,
	.legend-row {
		display: flex;
		align-items: center;
		height: 20px;
	}

	.legend-main {
		gap: 4px;
		margin-bottom: 1px;
		color: #333;
	}

	.fold-box {
		width: 13px;
		height: 12px;
		border: 1px solid #777;
		border-radius: 2px;
		background: linear-gradient(#777, #777) center / 9px 1px no-repeat;
	}

	.pair {
		width: 98px;
		font-size: 17px;
		white-space: nowrap;
		color: #111;
	}

	.legend-main .caret {
		margin-right: 6px;
	}

	.quote {
		width: 69px;
		font-size: 14px;
		white-space: nowrap;
	}

	.quote:nth-of-type(2) {
		margin-left: 2px;
	}

	.quote b {
		font-weight: 400;
		color: #28603f;
	}

	.chip {
		width: 14px;
		height: 14px;
		background: #d8d8d8;
	}

	.chip.blue {
		background: #3bb3e4;
	}

	.chips {
		display: flex;
		gap: 3px;
		margin: 0 7px 0 11px;
	}

	.legend-row {
		font-size: 11px;
		font-weight: 600;
	}

	.legend-name {
		margin-right: 4px;
	}

	.legend-value {
		margin-right: 9px;
		font-size: 12px;
	}

	.market {
		position: absolute;
		top: 9px;
		right: 60px;
		display: flex;
		align-items: center;
		gap: 4px;
		font-size: 11px;
		font-weight: 600;
		line-height: 18px;
		color: #999;
	}

	.market i {
		width: 6px;
		height: 6px;
		border-radius: 50%;
		background: #888;
	}

	.watermark.logo {
		position: absolute;
		bottom: 30px;
		left: 12px;
		width: auto;
		font-size: 17px;
		line-height: 28px;
		color: #555;
	}

	.watermark strong {
		font-size: 20px;
		line-height: 28px;
		color: #000;
	}

	.watermark strong span::after {
		width: 4px;
		height: 4px;
		box-shadow: none;
	}

	.bottom-bar {
		display: flex;
		align-items: center;
		height: 21px;
		border: 1px solid #d8dbe0;
		border-top: 0;
		background: #e4e4e6;
		font-size: 11px;
		font-weight: 600;
		color: #8d8d8d;
	}

	.bottom-bar button {
		height: 14px;
		padding: 0 12px;
	}

	.bottom-bar .range {
		padding: 0 12px 0 13px;
	}

	.bottom-bar button + button,
	.clock + button {
		border-left: 1px solid #b5b5b5;
	}

	.clock {
		margin-left: auto;
		padding-right: 12px;
		font-weight: 400;
	}

	.bottom-bar .auto {
		color: #3bb3e4;
	}

	.scrollbar {
		display: flex;
		flex-direction: column;
		width: 17px;
		background: #f1f1f1;
	}

	.scrollbar i {
		width: 0;
		margin: 7px 5px;
		border: 4px solid transparent;
		border-top: 0;
		border-bottom-color: #444;
	}

	.scrollbar span {
		height: 269px;
		margin: auto 2px 17px;
		background: #c1c1c1;
	}

	/* desktop */
	.taskbar {
		display: flex;
		height: 40px;
		padding-left: 14px;
		background: #84544b;
		color: #fff;
	}

	.app {
		width: 62px;
	}

	.app:nth-child(4) {
		margin-right: 3px;
	}

	.app.open {
		position: relative;
		width: 50px;
		box-sizing: border-box;
		margin: 1px 12px 1px 0;
		border: 1px solid #c0a29d;
		background: #9c756e;
	}

	.app.open::after {
		content: '';
		position: absolute;
		inset: -1px -8px -1px auto;
		width: 3px;
		border: 1px solid #c0a29d;
		border-left-color: #b08d87;
	}

	.globe {
		width: 30px;
		border-radius: 50%;
		background: radial-gradient(circle at 35% 30%, #8aa6e0, #1b3f9c 60%, #0b2366);
		font-size: 21px;
		font-weight: 900;
		line-height: 30px;
		color: #f21408;
	}

	.tray {
		display: flex;
		align-items: center;
		gap: 8px;
		margin-left: auto;
		padding-right: 26px;
	}

	.tray-nj {
		margin-left: 4px;
		font-size: 16px;
		font-weight: 900;
		color: #e01212;
	}

	.tray time {
		margin-left: 10px;
		line-height: 17px;
		text-align: center;
	}

	.corner-window {
		position: absolute;
		right: 0;
		bottom: 0;
		width: 9px;
		height: 55px;
		border: 1px solid #ccc;
		border-width: 1px 0 0 1px;
		background: #f1f1f1;
	}

	.language-bar {
		position: absolute;
		top: 0;
		right: 120px;
		display: flex;
		align-items: center;
		gap: 9px;
		box-sizing: border-box;
		width: 148px;
		height: 25px;
		padding-left: 4px;
		border: 2px solid #3d6fd0;
		border-top-width: 0;
		background: linear-gradient(#d6e3fb, #a9c3f2);
		font-size: 15px;
		color: #18305e;
	}

	.language-bar b {
		margin-right: 4px;
		font-weight: 900;
		color: #d41212;
	}

	.language-bar span:nth-child(3) {
		font: 700 14px 'Liberation Mono', monospace;
	}

	.language-bar span {
		font-weight: 500;
	}

	.ime {
		position: absolute;
		top: 69px;
		left: 466px;
		box-sizing: border-box;
		width: 686px;
		height: 36px;
		padding: 5px;
		border: 1px solid #b96a60;
		background: #df8d7e;
	}

	.ime-inner {
		display: flex;
		box-sizing: border-box;
		height: 24px;
		border: 1px solid #a96056;
		background: #f5faff;
		color: #000;
	}

	.ime-logo {
		width: 20px;
		font-size: 16px;
		font-weight: 700;
		line-height: 21px;
		text-align: center;
		color: #a12a22;
		border-right: 1px solid #999;
	}

	.ime-mode {
		padding: 0 1px 0 3px;
		border-right: 1px solid #999;
		font-size: 16px;
		line-height: 20px;
	}

	.ime-mode b {
		font-size: 13px;
	}

	.ime-buttons {
		display: flex;
		align-items: center;
		margin-left: auto;
	}

	.ime-buttons button {
		box-sizing: border-box;
		width: 21px;
		height: 22px;
		border-left: 1px solid #999;
	}

	.ime-buttons input {
		appearance: none;
		box-sizing: border-box;
		width: 13px;
		height: 15px;
		margin: 0 4px;
		border: 1px solid #15157a;
		background: #fff;
	}

	.ime-buttons input:checked::after {
		content: '';
		display: block;
		width: 7px;
		height: 3px;
		margin: 3px 1px;
		border: solid #15157a;
		border-width: 0 0 2px 2px;
		rotate: -45deg;
	}

	.ime-buttons .ime-char {
		font-size: 16px;
		font-weight: 700;
		color: #2a1a8a;
	}

	.ime-gbk span {
		border-bottom: 2px dotted #15157a;
		font: 700 8px/11px 'Liberation Sans', Arial, sans-serif;
		color: #15157a;
	}
</style>
